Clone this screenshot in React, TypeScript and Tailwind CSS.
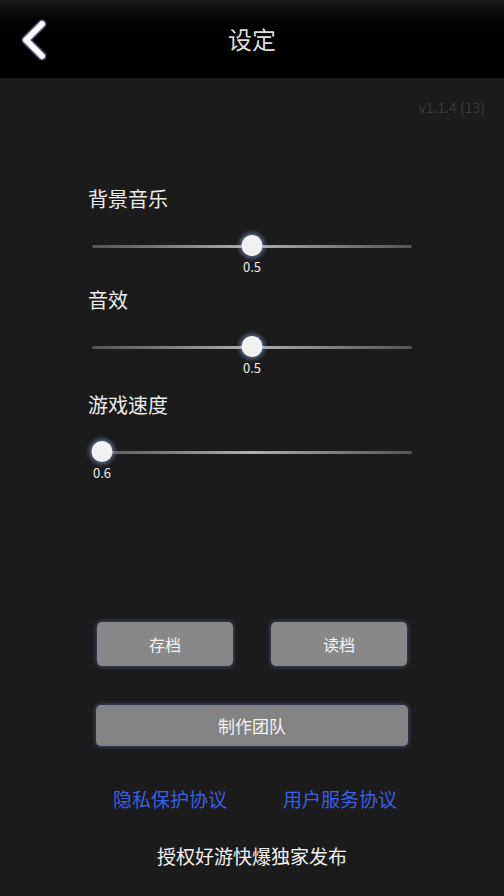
import React from 'react'

const font = "font-['Noto_Sans_CJK_SC','Noto_Sans',sans-serif]"

interface SliderProps {
  label: string
  value: string
  pos: number // thumb center x within track, px
}

function Slider({ label, value, pos }: SliderProps) {
  return (
    <div className="flex flex-col">
      <div className="pl-[88px] text-[20px] leading-[28px] text-[#ececec]">{label}</div>
      <div className="relative mx-[92px] mt-[22px] h-[22px]">
        <div className="absolute left-0 right-0 top-[10px] h-[3px] rounded-full bg-gradient-to-r from-[#555] via-[#b0b0b0] to-[#555]" />
        <div
          className="absolute top-0 h-[21px] w-[21px] -translate-x-1/2 rounded-full bg-[#f1f1f1] shadow-[0_0_4px_2px_rgba(150,175,230,0.55)]"
          style={{ left: pos }}
        />
        <div
          className="absolute top-[24px] -translate-x-1/2 text-[13px] leading-[16px] text-[#eeeeee]"
          style={{ left: pos }}
        >
          {value}
        </div>
      </div>
    </div>
  )
}

export default function App() {
  return (
    <div className={`${font} flex h-[896px] w-[504px] flex-col overflow-hidden bg-[#1b1b1b]`}>
      <div className="relative flex h-[78px] shrink-0 items-center justify-center bg-gradient-to-b from-[#1a1a1a] via-[#000] to-[#000]">
        <svg
          className="absolute left-[18px] top-[18px] h-[44px] w-[32px]"
          viewBox="0 0 32 44"
          fill="none"
        >
          <path
            d="M24 6 L8 22 L24 38"
            stroke="#a9bde8"
            strokeWidth="9"
            strokeLinecap="round"
            strokeLinejoin="round"
            opacity="0.45"
          />
          <path
            d="M24 6 L8 22 L24 38"
            stroke="#ffffff"
            strokeWidth="6"
            strokeLinecap="round"
            strokeLinejoin="round"
          />
        </svg>
        <span className="text-[24px] text-[#dcdcdc]">设定</span>
      </div>

      <div className="flex justify-end pr-[19px] pt-[19px] text-[14px] leading-[20px] text-[#3a3a3a]">
        v1.1.4 (13)
      </div>

      <div className="mt-[68px] flex flex-col">
        <Slider label="背景音乐" value="0.5" pos={160} />
        <div className="mt-[29px]">
          <Slider label="音效" value="0.5" pos={160} />
        </div>
        <div className="mt-[33px]">
          <Slider label="游戏速度" value="0.6" pos={10} />
        </div>
      </div>

      <div className="mt-[159px] flex justify-between px-[97px]">
        <button className="h-[44px] w-[136px] rounded-[5px] bg-[#888888] text-[16px] text-[#f4f4f4] shadow-[0_0_4px_1px_rgba(110,130,190,0.45)]">
          存档
        </button>
        <button className="h-[44px] w-[136px] rounded-[5px] bg-[#888888] text-[16px] text-[#f4f4f4] shadow-[0_0_4px_1px_rgba(110,130,190,0.45)]">
          读档
        </button>
      </div>

      <div className="mt-[39px] px-[96px]">
        <button className="h-[41px] w-full rounded-[5px] bg-[#838383] text-[17px] text-[#f4f4f4] shadow-[0_0_4px_1px_rgba(110,130,190,0.45)]">
          制作团队
        </button>
      </div>

      <div className="mt-[39px] flex justify-center gap-[56px] pl-[6px] text-[19px] leading-[28px] text-[#3a5fe6]">
        <span>隐私保护协议</span>
        <span>用户服务协议</span>
      </div>

      <div className="mt-[29px] text-center text-[19px] leading-[28px] text-[#f2f2f2]">
        授权好游快爆独家发布
      </div>
    </div>
  )
}
